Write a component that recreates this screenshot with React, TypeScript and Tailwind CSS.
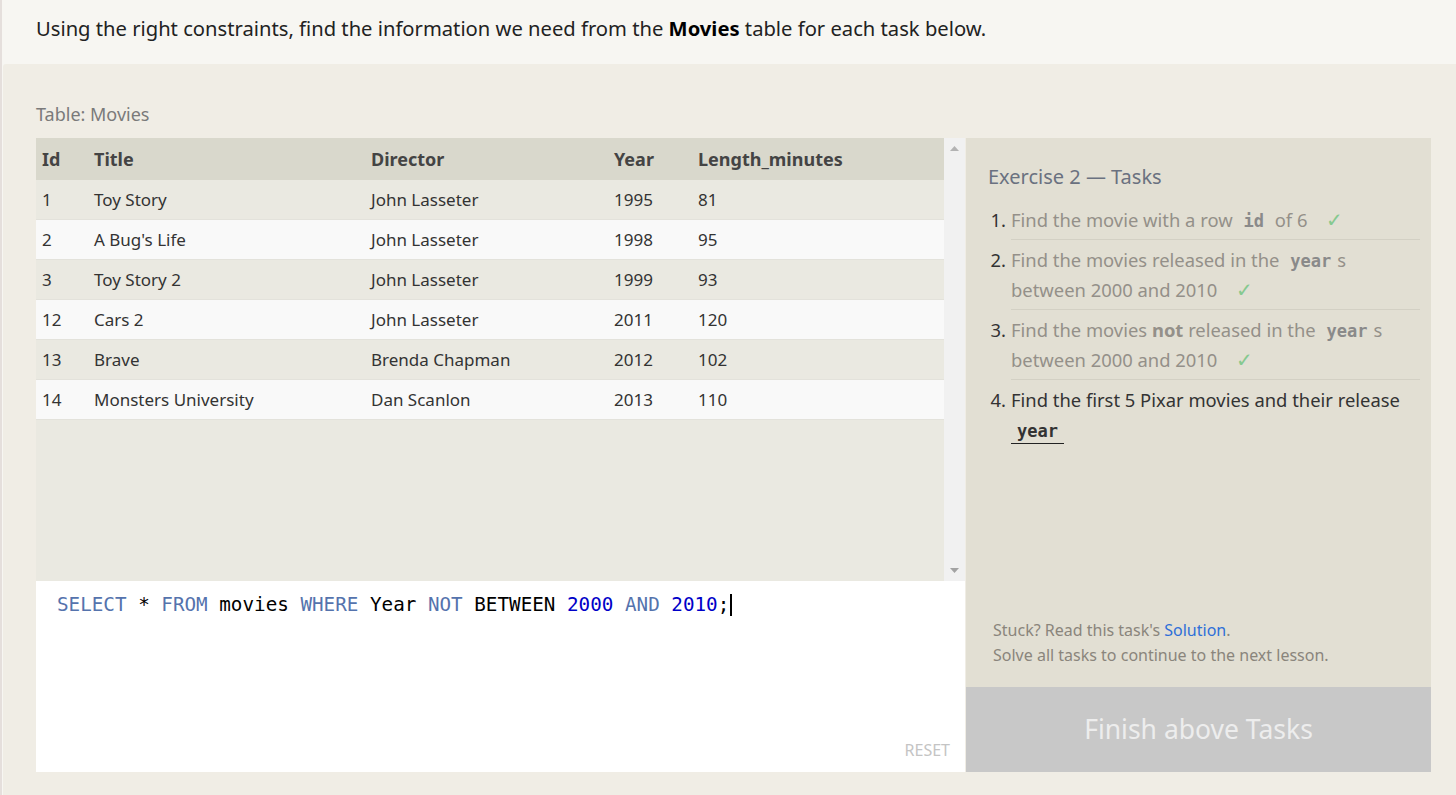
import React from 'react';

const movies = [
  { id: 1, title: 'Toy Story', director: 'John Lasseter', year: 1995, length: 81 },
  { id: 2, title: "A Bug's Life", director: 'John Lasseter', year: 1998, length: 95 },
  { id: 3, title: 'Toy Story 2', director: 'John Lasseter', year: 1999, length: 93 },
  { id: 12, title: 'Cars 2', director: 'John Lasseter', year: 2011, length: 120 },
  { id: 13, title: 'Brave', director: 'Brenda Chapman', year: 2012, length: 102 },
  { id: 14, title: 'Monsters University', director: 'Dan Scanlon', year: 2013, length: 110 },
];

const sans = "font-['Noto_Sans',sans-serif]";
const cols = 'grid grid-cols-[52px_277px_243px_84px_1fr] items-center pl-[6px]';

function Code({ children, dark }: { children: React.ReactNode; dark?: boolean }) {
  return (
    <code
      className={`font-['DejaVu_Sans_Mono',monospace] font-bold text-[17px] leading-[16px] px-[6px] ${
        dark ? 'text-[#333]' : 'text-[#8a8a8a]'
      }`}
    >
      {children}
    </code>
  );
}

function Check() {
  return <span className="ml-[14px] text-[20px] leading-[20px] text-[#86c98f]">✓</span>;
}

function Task({ n, done, last, children }: { n: number; done?: boolean; last?: boolean; children: React.ReactNode }) {
  return (
    <li className="flex">
      <span className="w-[18px] shrink-0 text-right text-[#333] pt-[5px]">{n}.</span>
      <div
        className={`flex-1 ml-[5px] pt-[5px] pb-[4px] ${last ? '' : 'border-b border-[#d3d0c4]'} ${
          done ? 'text-[#949089]' : 'text-[#333]'
        }`}
      >
        {children}
      </div>
    </li>
  );
}

export default function App() {
  return (
    <div className={`min-h-screen flex flex-col bg-[#f7f6f2] border-l-[2px] border-[#e5dfdc] ${sans}`}>
      <div className="h-[64px] pl-[34px] pt-[14px]">
        <p className="text-[20.2px] leading-[28px] text-[#222]">
          Using the right constraints, find the information we need from the <b className="text-black">Movies</b> table
          for each task below.
        </p>
      </div>

      <div className="flex-1 bg-[#f0ede5] rounded-tl-[3px] ml-[1px] pl-[33px] pb-[23px]">
        <div className="pt-[38px] h-[74px] text-[18px] leading-[24px] text-[#7a7a7a]">Table: Movies</div>

        <div className="flex">
          {/* left column */}
          <div className="w-[929px] flex flex-col">
            <div className="h-[443px] flex bg-[#eae9e1]">
              <div className="w-[908px] text-[#333]">
                <div className={`${cols} h-[42px] bg-[#d9d8cc] text-[18px] font-bold text-[#444]`}>
                  <span>Id</span>
                  <span>Title</span>
                  <span>Director</span>
                  <span>Year</span>
                  <span>Length_minutes</span>
                </div>
                {movies.map((m, i) => (
                  <div
                    key={m.id}
                    className={`${cols} h-[40px] text-[17px] border-b border-[#e3e2db] ${
                      i % 2 === 0 ? 'bg-[#eae9e1]' : 'bg-[#f9f9f9]'
                    }`}
                  >
                    <span>{m.id}</span>
                    <span>{m.title}</span>
                    <span>{m.director}</span>
                    <span>{m.year}</span>
                    <span>{m.length}</span>
                  </div>
                ))}
              </div>
              <div className="w-[21px] bg-[#f1f1f1] flex flex-col items-center justify-between py-[8px]">
                <svg width="9" height="5" viewBox="0 0 9 5">
                  <path d="M0 5 L4.5 0 L9 5 Z" fill="#b3b3b3" />
                </svg>
                <svg width="9" height="5" viewBox="0 0 9 5">
                  <path d="M0 0 L4.5 5 L9 0 Z" fill="#a3a3a3" />
                </svg>
              </div>
            </div>

            <div className="h-[191px] bg-white flex flex-col justify-between pl-[21px] pr-[15px] pt-[12px] pb-[12px]">
              <div className="font-['DejaVu_Sans_Mono',monospace] text-[19.25px] leading-[24px] text-black whitespace-pre">
                <span className="text-[#5573ad]">SELECT</span>
                {' * '}
                <span className="text-[#5573ad]">FROM</span>
                {' movies '}
                <span className="text-[#5573ad]">WHERE</span>
                {' Year '}
                <span className="text-[#5573ad]">NOT</span>
                {' BETWEEN '}
                <span className="text-[#0000c8]">2000</span>
                {' '}
                <span className="text-[#5573ad]">AND</span>
                {' '}
                <span className="text-[#0000c8]">2010</span>
                {';'}
                <span className="inline-block w-[2px] h-[22px] bg-black ml-[1px] align-[-5px]" />
              </div>
              <div className="self-end text-[16px] leading-[20px] text-[#c4c4c4]">RESET</div>
            </div>
          </div>

          {/* right column */}
          <div className="w-[465px] ml-[1px] flex flex-col">
            <div className="h-[549px] bg-[#e2dfd3] flex flex-col pl-[22px] pr-[11px] pt-[27px] pb-[19px]">
              <h3 className="text-[20px] leading-[24px] text-[#6a7180]">Exercise 2 — Tasks</h3>
              <ol className="mt-[11px] text-[18.4px] leading-[30px]">
                <Task n={1} done>
                  Find the movie with a row <Code>id</Code> of 6 <Check />
                </Task>
                <Task n={2} done>
                  Find the movies released in the <Code>year</Code>s
                  <br />
                  between 2000 and 2010 <Check />
                </Task>
                <Task n={3} done>
                  Find the movies <b className="font-bold">not</b> released in the <Code>year</Code>s
                  <br />
                  between 2000 and 2010 <Check />
                </Task>
                <Task n={4} last>
                  Find the first 5 Pixar movies and their release
                  <br />
                  <span className="inline-block border-b border-[#222] leading-[26px]">
                    <Code dark>year</Code>
                  </span>
                </Task>
              </ol>
              <div className="mt-auto pl-[5px] text-[16px] leading-[25px] text-[#8a857c]">
                <p>
                  Stuck? Read this task's <span className="text-[#2e6fd8]">Solution</span>.
                </p>
                <p>Solve all tasks to continue to the next lesson.</p>
              </div>
            </div>
            <div className="h-[85px] bg-[#c8c8c8] flex items-center justify-center text-[26.5px] text-[#ededed]">
              Finish above Tasks
            </div>
          </div>
        </div>
      </div>
    </div>
  );
}
